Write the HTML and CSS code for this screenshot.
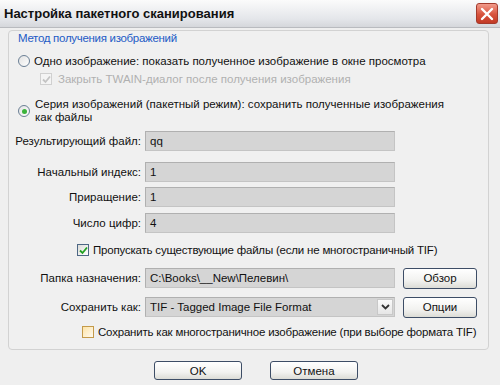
FILE: index.html
```html
<!DOCTYPE html>
<html lang="ru">
<head>
  <meta charset="UTF-8" />
  <title>Настройка пакетного сканирования</title>
  <link rel="stylesheet" href="styles.css">
</head>
<body>

  <div class="dialog">
    <!-- Заголовок окна -->
    <div class="titlebar">
      <span class="title">Настройка пакетного сканирования</span>
      <span class="close-btn">
        <svg width="14" height="14" viewBox="0 0 14 14"><path d="M2 2 L12 12 M12 2 L2 12" stroke="#fff" stroke-width="2.4" stroke-linecap="round"/></svg>
      </span>
    </div>

    <!-- Группа -->
    <div class="group">
      <div class="legend">Метод получения изображений</div>

      <label class="opt row-radio1">
        <span class="radio"></span>
        <span>Одно изображение: показать полученное изображение в окне просмотра</span>
      </label>

      <label class="opt opt-disabled row-twain">
        <span class="check check-disabled">
          <svg width="9" height="9" viewBox="0 0 9 9"><path d="M1 4.5 L3.5 7 L8 1.5" fill="none" stroke="#c4c4c4" stroke-width="1.8"/></svg>
        </span>
        <span>Закрыть TWAIN-диалог после получения изображения</span>
      </label>

      <label class="opt row-radio2">
        <span class="radio radio-on"><span class="dot"></span></span>
        <span class="multiline">Серия изображений (пакетный режим): сохранить полученные изображения<br>как файлы</span>
      </label>

      <div class="field row-result">
        <span class="field-label">Результирующий файл:</span>
        <span class="input">qq</span>
      </div>

      <div class="field row-start">
        <span class="field-label">Начальный индекс:</span>
        <span class="input">1</span>
      </div>

      <div class="field row-step">
        <span class="field-label">Приращение:</span>
        <span class="input">1</span>
      </div>

      <div class="field row-digits">
        <span class="field-label">Число цифр:</span>
        <span class="input">4</span>
      </div>

      <label class="opt opt-tight row-skip">
        <span class="check">
          <svg width="9" height="9" viewBox="0 0 9 9"><path d="M1 4.5 L3.5 7 L8 1.5" fill="none" stroke="#21a121" stroke-width="1.8"/></svg>
        </span>
        <span>Пропускать существующие файлы (если не многостраничный TIF)</span>
      </label>

      <div class="field row-folder">
        <span class="field-label">Папка назначения:</span>
        <span class="input">C:\Books\__New\Пелевин\</span>
        <button class="btn">Обзор</button>
      </div>

      <div class="field row-format">
        <span class="field-label">Сохранить как:</span>
        <span class="input select">
          <span class="select-text">TIF - Tagged Image File Format</span>
          <span class="select-arrow">
            <svg width="9" height="6" viewBox="0 0 9 6"><path d="M1 1 L4.5 4.5 L8 1" fill="none" stroke="#333" stroke-width="1.8"/></svg>
          </span>
        </span>
        <button class="btn">Опции</button>
      </div>

      <label class="opt opt-tight row-multi">
        <span class="check check-hover"></span>
        <span>Сохранить как многостраничное изображение (при выборе формата TIF)</span>
      </label>
    </div>

    <!-- Кнопки -->
    <div class="actions">
      <button class="btn btn-wide">OK</button>
      <button class="btn btn-wide">Отмена</button>
    </div>
  </div>

</body>
</html>
```

FILE: styles.css
```css
body {
  margin: 0;
  font-family: "Liberation Sans", Arial, sans-serif;
  font-size: 11.5px;
  color: #111;
  background-color: #efefef;
}
.dialog {
  width: 500px;
  height: 385px;
  background-color: #efefef;
  overflow: hidden;
  white-space: nowrap;
}
.titlebar {
  height: 27px;
  display: flex;
  align-items: center;
  justify-content: space-between;
  padding: 0 2px 0 4px;
  background: linear-gradient(#fbfbfb, #e4e6ea 70%, #d5d7db);
  border-bottom: 1px solid #b9bbbf;
}
.title {
  font-weight: bold;
  font-size: 13px;
  color: #111;
}
.close-btn {
  width: 22px;
  height: 21px;
  border-radius: 3px;
  border: 1px solid #a33a2c;
  background: linear-gradient(#f19a8a, #d8533d 55%, #c23a25);
  display: flex;
  justify-content: center;
  align-items: center;
  box-sizing: border-box;
}
.group {
  margin: 2px 11px 0 8px;
  height: 320px;
  border: 1px solid #d2d2d2;
  border-radius: 4px;
  box-sizing: border-box;
  display: flex;
  flex-direction: column;
  background-color: #f0f0f0;
}
.legend {
  color: #1d5bc6;
  margin: 0 0 0 9px;
  height: 14px;
  line-height: 14px;
  letter-spacing: -0.3px;
}
.opt {
  display: flex;
  align-items: center;
  height: 16px;
  gap: 4px;
}
.opt-tight {
  letter-spacing: -0.2px;
}
.opt-disabled {
  color: #b0b0b0;
}
.radio {
  width: 12px;
  height: 12px;
  border-radius: 50%;
  border: 1px solid #6a7f95;
  background: linear-gradient(135deg, #e2e2e2, #ffffff);
  box-sizing: border-box;
  display: flex;
  justify-content: center;
  align-items: center;
  flex-shrink: 0;
}
.radio-on .dot {
  width: 5px;
  height: 5px;
  border-radius: 50%;
  background: #3bb33b;
}
.check {
  width: 12px;
  height: 12px;
  border: 1px solid #4d6785;
  background: linear-gradient(135deg, #dcdcd8, #ffffff);
  box-sizing: border-box;
  display: flex;
  justify-content: center;
  align-items: center;
  flex-shrink: 0;
}
.check-disabled {
  border-color: #d0d0d0;
  background: #f4f4f4;
}
.check-hover {
  border-color: #c49a4a;
  background: linear-gradient(135deg, #fde4a8, #fffaf0);
}
.multiline {
  line-height: 13px;
}

/* позиции строк */
.row-radio1 { margin: 8px 0 0 9px; }
.row-twain { margin: 2px 0 0 31px; gap: 6px; }
.row-radio2 { margin: 10px 0 0 9px; height: 28px; gap: 5px; }
.row-result { margin-top: 6px; }
.row-start { margin-top: 11px; }
.row-step { margin-top: 5px; }
.row-digits { margin-top: 6px; }
.row-skip { margin: 9px 0 0 68px; }
.row-folder { margin-top: 10px; }
.row-format { margin-top: 9px; }
.row-multi { margin: 7px 0 0 73px; }

.field {
  display: flex;
  align-items: center;
  height: 20px;
}
.field-label {
  width: 132px;
  text-align: right;
  margin-right: 4px;
  flex-shrink: 0;
}
.input {
  width: 250px;
  height: 20px;
  box-sizing: border-box;
  background-color: #d5d5d5;
  border: 1px solid #c4c4c4;
  border-top-color: #b0b0b0;
  border-left-color: #b0b0b0;
  padding: 0 4px;
  display: flex;
  align-items: center;
}
.select {
  padding: 0 1px 0 4px;
  justify-content: space-between;
}
.select-arrow {
  width: 16px;
  height: 16px;
  box-sizing: border-box;
  border: 1px solid #c8c8c8;
  background: linear-gradient(#fafafa, #e6e6e6);
  display: flex;
  justify-content: center;
  align-items: center;
}
.btn {
  font-family: inherit;
  font-size: 11.5px;
  color: #111;
  height: 21px;
  width: 74px;
  margin-left: 8px;
  padding: 0;
  border: 1px solid #3d4d66;
  border-radius: 3px;
  background: linear-gradient(#ffffff, #f2f2f0 60%, #dcdcd6);
  box-sizing: border-box;
}
.actions {
  display: flex;
  justify-content: center;
  gap: 28px;
  margin-top: 11px;
  padding-left: 12px;
}
.btn-wide {
  width: 88px;
  height: 19px;
  margin: 0;
}
```
